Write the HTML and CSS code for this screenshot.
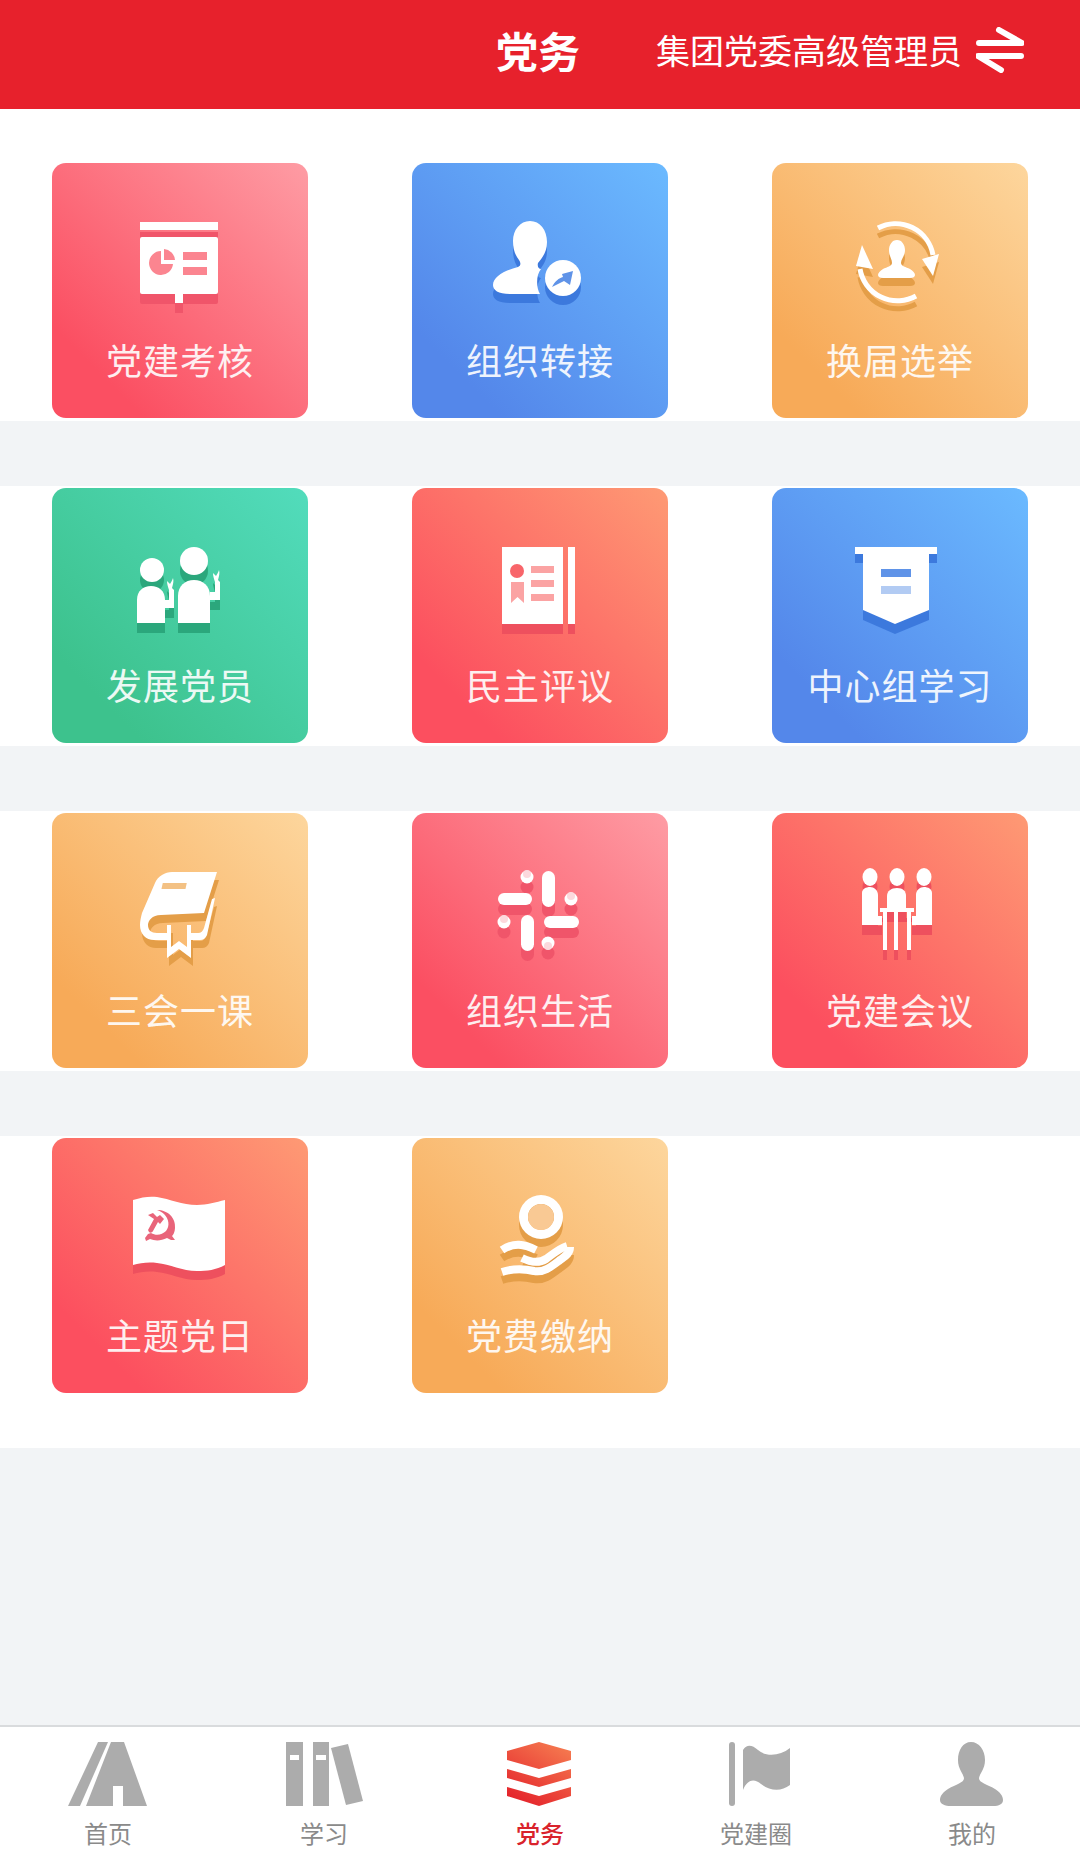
FILE: index.html
```html
<!DOCTYPE html>
<html lang="zh-CN">
  <head>
    <meta charset="UTF-8" />
    <meta name="viewport" content="width=device-width, initial-scale=1.0" />
    <title>党务</title>
    <link rel="stylesheet" href="styles.css">
  </head>
  <body>
    <header class="top-bar">
      <span></span>
      <h1 class="top-title">党务</h1>
      <div class="role-switch">
        <span>集团党委高级管理员</span>
        <svg class="swap-icon" viewBox="0 0 48 46">
          <path d="M23 3L46 16H3" />
          <path d="M45 29H2L25 43" />
        </svg>
      </div>
    </header>

    <main class="content">
      <section class="row row-first">
        <a class="card card-pink">
          <svg class="card-icon" viewBox="0 0 120 110">
            <defs>
              <g id="board"><rect x="20" y="9" width="78" height="8" /><rect x="20" y="24" width="78" height="57" rx="2" /><rect x="55" y="80" width="8" height="10" /></g>
            </defs>
            <use href="#board" y="10" class="shade-pink" />
            <use href="#board" class="ink" />
            <path class="cut-pink" d="M41 38A12 12 0 1 0 53 51H41Z" />
            <path class="cut-pink" d="M44 36A12 12 0 0 1 55 47H44Z" />
            <rect class="cut-pink" x="63" y="39" width="24" height="8" />
            <rect class="cut-pink" x="63" y="54" width="24" height="8" />
          </svg>
          <span class="card-label">党建考核</span>
        </a>
        <a class="card card-blue">
          <svg class="card-icon" viewBox="0 0 120 110">
            <defs>
              <g id="member"><path d="M50 8C60 8 67 17 67 29C67 40 61 46 58 50C57 54 59 56 61 56C56 62 56 74 60 81H30C18 81 13 77 13 72C13 63 26 57 38 54C41 53 41 50 39 47C35 42 33 36 33 28C33 17 40 8 50 8Z" /><circle cx="83" cy="65" r="18" /></g>
            </defs>
            <use href="#member" y="9" class="shade-blue" />
            <use href="#member" class="ink" />
            <path class="cut-blue" d="M93 58L90 72L84 68L72 74C75 68 79 65 83 64L82 61Z" />
          </svg>
          <span class="card-label">组织转接</span>
        </a>
        <a class="card card-orange">
          <svg class="card-icon" viewBox="0 0 120 110">
            <defs>
              <g id="cycle">
                <path class="arc" d="M38 15A38 38 0 0 1 93 42" />
                <path class="arc" d="M76 83A38 38 0 0 1 20 56" />
                <path d="M82 46L99 41L93 63Z" />
                <path d="M16 53L22 32L33 56Z" />
                <path d="M57 27C62 27 65 32 65 37C65 43 61 46 61 50C61 53 66 54 70 56C73 58 75 60 75 62C75 64 73 65 70 65H43C40 65 38 64 38 62C38 60 40 58 43 56C47 54 52 53 52 50C52 46 49 43 49 37C49 32 52 27 57 27Z" />
              </g>
            </defs>
            <use href="#cycle" y="8" class="shade-orange" />
            <use href="#cycle" class="ink" />
          </svg>
          <span class="card-label">换届选举</span>
        </a>
      </section>

      <section class="row">
        <a class="card card-green">
          <svg class="card-icon" viewBox="0 0 120 110">
            <defs>
              <g id="oath">
                <circle cx="32" cy="32" r="12" />
                <path d="M17 85V62C17 53 23 48 31 48C39 48 45 53 45 62V85Z" />
                <path d="M45 70H54V52L52 50C53 46 54 43 53 40C52 43 51 44 50 46C49 45 48 44 47 43C47 46 48 49 49 52V62H45Z" />
                <circle cx="74" cy="23" r="14" />
                <path d="M58 85V58C58 48 65 42 74 42C83 42 90 48 90 58V85Z" />
                <path transform="translate(46 -8)" d="M44 70H54V52L52 50C53 46 54 43 53 40C52 43 51 44 50 46C49 45 48 44 47 43C47 46 48 49 49 52V62H44Z" />
              </g>
            </defs>
            <use href="#oath" y="10" class="shade-green" />
            <use href="#oath" class="ink" />
          </svg>
          <span class="card-label">发展党员</span>
        </a>
        <a class="card card-coral">
          <svg class="card-icon" viewBox="0 0 120 110">
            <defs>
              <g id="record"><rect x="22" y="9" width="61" height="77" /><rect x="88" y="9" width="7" height="77" /></g>
            </defs>
            <use href="#record" y="10" class="shade-coral" />
            <use href="#record" class="ink" />
            <circle class="cut-coral" cx="37" cy="33" r="7" />
            <path class="cut-fade" d="M31 44H44V65L37.500 59L31 65Z" />
            <rect class="cut-fade" x="51" y="28" width="23" height="7" />
            <rect class="cut-fade" x="51" y="42" width="23" height="7" />
            <rect class="cut-fade" x="51" y="56" width="23" height="7" />
          </svg>
          <span class="card-label">民主评议</span>
        </a>
        <a class="card card-blue">
          <svg class="card-icon" viewBox="0 0 120 110">
            <rect class="shade-blue" x="15" y="16" width="82" height="9" />
            <path class="shade-blue" d="M23 30H89V82L55 96L23 82Z" />
            <rect class="ink" x="15" y="9" width="82" height="7" />
            <path class="ink" d="M23 16H89V72L55 86L23 72Z" />
            <rect class="cut-blue" x="41" y="31" width="30" height="8" />
            <rect class="cut-blue-fade" x="41" y="48" width="30" height="8" />
          </svg>
          <span class="card-label">中心组学习</span>
        </a>
      </section>

      <section class="row">
        <a class="card card-orange">
          <svg class="card-icon" viewBox="0 0 120 110">
            <defs>
              <g id="book"><path d="M97 9L84 50L41 52C32 52 28 58 28 62C28 67 31 70 37 70H47V62H51V84L59 78L67 84V62H71V70H78C81 70 83 68 84 65L92 36L95 35L87 72C86 75 83 77 80 77H71V95L59 86L47 95V77H34C26 77 20 71 20 62C20 58 21 54 22 50L35 20C38 13 45 9 52 9Z" /></g>
            </defs>
            <use href="#book" x="2" y="8" class="shade-orange" />
            <use href="#book" class="ink" />
            <rect class="cut-orange" x="47" y="20" width="24" height="6" transform="skewX(-12)" />
          </svg>
          <span class="card-label">三会一课</span>
        </a>
        <a class="card card-pink">
          <svg class="card-icon" viewBox="0 0 120 110">
            <defs>
              <g id="hash"><rect x="62" y="8" width="13" height="36" rx="6.500" /><rect x="18" y="30" width="34" height="12" rx="6" /><rect x="41" y="52" width="13" height="36" rx="6.500" /><rect x="64" y="53" width="35" height="12" rx="6" /><circle cx="47" cy="14" r="6.500" /><circle cx="91" cy="36" r="6.500" /><circle cx="24" cy="59" r="6.500" /><circle cx="68" cy="80" r="6.500" /></g>
            </defs>
            <use href="#hash" y="10" class="shade-pink" />
            <use href="#hash" class="ink" />
            <circle class="cut-dot" cx="47" cy="11" r="4" />
            <circle class="cut-dot" cx="91" cy="33" r="4" />
            <circle class="cut-dot" cx="24" cy="56" r="4" />
            <circle class="cut-dot" cx="68" cy="83" r="4" />
          </svg>
          <span class="card-label">组织生活</span>
        </a>
        <a class="card card-coral">
          <svg class="card-icon" viewBox="0 0 120 110">
            <defs>
              <g id="meeting"><ellipse cx="30" cy="14" rx="7.500" ry="9" /><ellipse cx="57" cy="14" rx="7.500" ry="9" /><ellipse cx="84" cy="14" rx="7.500" ry="9" /><path d="M22 62V30C22 26 26 24 30 24C34 24 38 27 38 32V53H42V62Z" /><path d="M92 62V30C92 26 88 24 84 24C80 24 76 27 76 32V53H72V62Z" /><path d="M47 45V33C47 28 51 25 57 25C63 25 66 28 66 33V45Z" /><path d="M40 45H74V49H71V87H67V49H58V87H54V49H47V87H43V49H40Z" /></g>
            </defs>
            <use href="#meeting" y="10" class="shade-coral" />
            <use href="#meeting" class="ink" />
          </svg>
          <span class="card-label">党建会议</span>
        </a>
      </section>

      <section class="row row-last">
        <a class="card card-coral">
          <svg class="card-icon" viewBox="0 0 120 110">
            <defs>
              <path id="flag" d="M13 12C22 9 30 8 37 9C50 11 62 17 77 17C87 17 96 14 105 12V77C96 82 87 83 77 83C62 83 50 76 37 75C28 74 20 75 13 77Z" />
            </defs>
            <use href="#flag" y="9" class="shade-coral" />
            <use href="#flag" class="ink" />
            <path class="emblem" d="M37 22C48 22 56 30 55 40C55 44 53 47 52 48L55 52L51 52L47 50C41 53 35 53 30 51L26 53L25 50L28 46L31 45C36 48 42 47 46 43C50 38 49 31 44 26C42 24 40 23 37 22Z" />
            <path class="emblem" d="M28 27L33 25L37 29L40 27L44 31L40 36L38 34L33 43C32 45 30 45 29 44L28 42L34 31Z" />
          </svg>
          <span class="card-label">主题党日</span>
        </a>
        <a class="card card-orange">
          <svg class="card-icon" viewBox="0 0 120 110">
            <defs>
              <g id="hand">
                <path d="M61 7A22 22 0 1 0 61 51A22 22 0 1 0 61 7ZM61 16A13 13 0 1 1 61 42A13 13 0 1 1 61 16Z" />
                <path class="wave" d="M22 62C34 54 44 56 56 62" />
                <path class="wave" d="M42 70C50 74 58 76 66 71C74 65 80 60 87 58" />
                <path class="wave" d="M22 84C34 80 46 81 54 83C64 85 72 78 80 72C84 69 90 66 90 59" />
              </g>
            </defs>
            <use href="#hand" y="8" class="shade-orange" />
            <use href="#hand" class="ink" />
            <circle class="cut-hole" cx="61" cy="29" r="13" />
          </svg>
          <span class="card-label">党费缴纳</span>
        </a>
      </section>
    </main>

    <nav class="tab-bar">
      <a class="tab">
        <svg class="tab-icon" viewBox="0 0 90 64">
          <path d="M35 0H45L17 64H5Z" />
          <path d="M48 0H61L84 64H60V44H50V64H23Z" />
        </svg>
        <span>首页</span>
      </a>
      <a class="tab">
        <svg class="tab-icon" viewBox="0 0 90 64">
          <path fill-rule="evenodd" d="M7 0H24V64H7ZM11 13V18H20V13Z" />
          <path fill-rule="evenodd" d="M34 0H50V64H34ZM37 13V18H47V13Z" />
          <path d="M52 6L69 2L84 59L67 63Z" />
        </svg>
        <span>学习</span>
      </a>
      <a class="tab tab-active">
        <svg class="tab-icon" viewBox="0 0 90 64">
          <defs>
            <linearGradient id="stack" x1="0.800" y1="0" x2="0.200" y2="1">
              <stop offset="0" stop-color="#f5794f" />
              <stop offset="1" stop-color="#e4222b" />
            </linearGradient>
          </defs>
          <path fill="url(#stack)" d="M44 0L76 9V18L44 27L12 18V9ZM12 27L44 36L76 27V36L44 45L12 36ZM12 45L44 54L76 45V54L44 64L12 54Z" />
        </svg>
        <span>党务</span>
      </a>
      <a class="tab">
        <svg class="tab-icon" viewBox="0 0 90 64">
          <rect x="18" y="0" width="6" height="64" rx="3" />
          <path d="M32 8C36 2 41 3 47 8C55 15 69 14 79 6V43C70 50 59 49 50 42C44 37 37 36 32 48Z" />
        </svg>
        <span>党建圈</span>
      </a>
      <a class="tab">
        <svg class="tab-icon" viewBox="0 0 90 64">
          <path d="M44 0C52 0 58 8 58 18C58 27 53 31 52 36C52 41 60 42 68 47C73 50 76 54 76 58C76 62 72 64 66 64H24C18 64 13 62 13 58C13 54 16 50 21 47C29 42 37 41 37 36C36 31 31 27 31 18C31 8 36 0 44 0Z" />
        </svg>
        <span>我的</span>
      </a>
    </nav>
  </body>
</html>
```

FILE: styles.css
```css
* {
  box-sizing: border-box;
}
html,
body {
  height: 100%;
}
body {
  margin: 0;
  display: flex;
  flex-direction: column;
  height: 1856px;
  overflow: hidden;
  background-color: #f2f4f6;
  font-family: "Noto Sans CJK SC", "Noto Sans", sans-serif;
}

/* top bar */
.top-bar {
  flex: none;
  display: grid;
  grid-template-columns: 1fr auto 1fr;
  align-items: center;
  height: 109px;
  padding-bottom: 10px;
  background-color: #e7212c;
  color: #fff;
}
.top-title {
  margin: 0;
  padding-right: 4px;
  font-size: 42px;
  line-height: 1;
  font-weight: 700;
}
.role-switch {
  display: flex;
  justify-content: flex-end;
  align-items: center;
  gap: 14px;
  padding-right: 56px;
  font-size: 34px;
  line-height: 46px;
  white-space: nowrap;
}
.swap-icon {
  flex: none;
  width: 48px;
  height: 46px;
  fill: none;
  stroke: #fff;
  stroke-width: 6;
  stroke-linecap: round;
  stroke-linejoin: round;
}

/* grid of cards */
.content {
  flex: 1;
  display: flex;
  flex-direction: column;
  gap: 65px;
}
.row {
  display: grid;
  grid-template-columns: repeat(3, 256px);
  justify-content: space-between;
  padding: 2px 52px 3px;
  background-color: #fff;
}
.row-first {
  padding-top: 54px;
}
.row-last {
  padding-bottom: 55px;
}
.card {
  display: flex;
  flex-direction: column;
  align-items: center;
  height: 255px;
  padding-top: 50px;
  border-radius: 14px;
  color: #fff;
}
.card-icon {
  flex: none;
  width: 120px;
  height: 110px;
}
.card-label {
  margin-top: 14px;
  font-size: 36px;
  line-height: 44px;
  letter-spacing: 1px;
  white-space: nowrap;
  opacity: 0.9;
}
.card-pink {
  background: linear-gradient(45deg, #fb4f62 18%, #fe9ca4 100%);
}
.card-blue {
  background: linear-gradient(45deg, #5487ea 18%, #6bbaff 100%);
}
.card-orange {
  background: linear-gradient(45deg, #f7aa58 18%, #fdd69d 100%);
}
.card-green {
  background: linear-gradient(45deg, #3dc28d 18%, #52dcbc 100%);
}
.card-coral {
  background: linear-gradient(45deg, #fc4f5f 18%, #fe9a74 100%);
}

/* icon colours */
.ink {
  fill: #fff;
  color: #fff;
}
.shade-pink {
  fill: #f0556a;
  color: #f0556a;
}
.shade-blue {
  fill: #3c79dd;
  color: #3c79dd;
}
.shade-orange {
  fill: #e49e48;
  color: #e49e48;
}
.shade-green {
  fill: #2ba77c;
  color: #2ba77c;
}
.shade-coral {
  fill: #ee505e;
  color: #ee505e;
}
.arc {
  fill: none;
  stroke: currentColor;
  stroke-width: 5;
}
.wave {
  fill: none;
  stroke: currentColor;
  stroke-width: 8;
}
.cut-pink {
  fill: #fb8590;
}
.cut-coral {
  fill: #f8656a;
}
.cut-fade {
  fill: #fba3a3;
}
.cut-blue {
  fill: #5f93e8;
}
.cut-blue-fade {
  fill: #b2cbf3;
}
.cut-orange {
  fill: #f3c184;
}
.cut-dot {
  fill: #fcd9dd;
}
.cut-hole {
  fill: #f9c994;
}
.emblem {
  fill: #e9647a;
}

/* bottom tabs */
.tab-bar {
  flex: none;
  display: grid;
  grid-template-columns: repeat(5, 1fr);
  height: 131px;
  padding-top: 15px;
  border-top: 2px solid #d9dbdd;
  background-color: #fff;
}
.tab {
  display: flex;
  flex-direction: column;
  align-items: center;
  gap: 12px;
  font-size: 24px;
  line-height: 30px;
  color: #8a8a8a;
}
.tab-icon {
  flex: none;
  width: 90px;
  height: 64px;
  fill: #acacac;
}
.tab-active {
  color: #d9232c;
  font-weight: 500;
}
```
